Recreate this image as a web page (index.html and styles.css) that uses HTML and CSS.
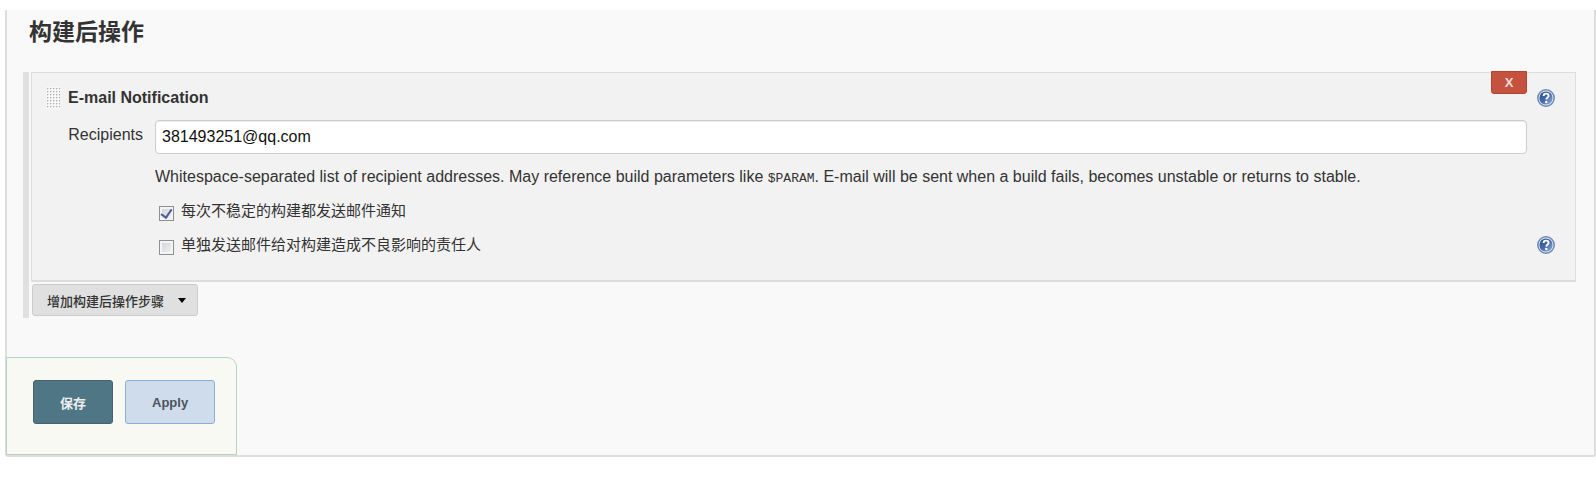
FILE: index.html
```html
<!DOCTYPE html>
<html lang="zh-CN">
<head>
    <meta charset="UTF-8">
    <meta name="viewport" content="width=device-width, initial-scale=1.0">
    <title>构建后操作</title>
    <link rel="stylesheet" href="styles.css">
</head>
<body>
    <svg width="0" height="0" class="defs" aria-hidden="true">
        <defs>
            <linearGradient id="help-fill" x1="0" y1="0" x2="1" y2="1">
                <stop offset="0" stop-color="#2c4f8c"/>
                <stop offset="0.5" stop-color="#4369a6"/>
                <stop offset="1" stop-color="#9bb5da"/>
            </linearGradient>
            <symbol id="help" viewBox="0 0 18 18">
                <circle cx="9" cy="9" r="8.2" fill="#e6edf6" stroke="#6a88b8" stroke-width="1.5"/>
                <circle cx="9" cy="9" r="6.6" fill="url(#help-fill)"/>
                <path d="M6.6 7C6.6 5.4 7.6 4.6 9.1 4.6s2.5.8 2.5 2.1c0 1.7-2.2 1.8-2.2 3.8" fill="none" stroke="#fff" stroke-width="1.9"/>
                <circle cx="9.3" cy="13" r="1.2" fill="#fff"/>
            </symbol>
            <pattern id="dots" width="3" height="3" patternUnits="userSpaceOnUse">
                <rect width="3" height="3" fill="#f8f8f8"/>
                <rect x="1" y="1" width="1" height="1" fill="#b0b0b0"/>
                <rect x="2" y="1" width="1" height="1" fill="#d8d8d8"/>
                <rect x="1" y="2" width="1" height="1" fill="#dcdcdc"/>
            </pattern>
        </defs>
    </svg>

    <form class="config" onsubmit="return false">
        <h1 class="section-title">构建后操作</h1>

        <div class="steps">
            <div class="step">
                <button type="button" class="delete" aria-label="Delete">X</button>

                <div class="step-header">
                    <svg class="handle" width="14" height="22" aria-hidden="true"><rect width="14" height="22" fill="url(#dots)"/></svg>
                    <h2 class="step-title">E-mail Notification</h2>
                    <button type="button" class="help" aria-label="Help"><svg width="18" height="18"><use href="#help"/></svg></button>
                </div>

                <div class="row">
                    <label class="name" for="recipients">Recipients</label>
                    <input type="text" class="text" id="recipients" value="381493251@qq.com">
                </div>

                <p class="description">Whitespace-separated list of recipient addresses. May reference build parameters like <code>$PARAM</code>. E-mail will be sent when a build fails, becomes unstable or returns to stable.</p>

                <div class="option">
                    <input type="checkbox" id="unstable" checked>
                    <label for="unstable">每次不稳定的构建都发送邮件通知</label>
                </div>
                <div class="option">
                    <input type="checkbox" id="individuals">
                    <label for="individuals">单独发送邮件给对构建造成不良影响的责任人</label>
                    <button type="button" class="help" aria-label="Help"><svg width="18" height="18"><use href="#help"/></svg></button>
                </div>
            </div>

            <button type="button" class="add">增加构建后操作步骤<span class="caret"></span></button>
        </div>

        <div class="actions">
            <button type="submit" class="save">保存</button>
            <button type="button" class="apply">Apply</button>
        </div>
    </form>
</body>
</html>
```
FILE: styles.css
```css
* {
    box-sizing: border-box;
}

body {
    margin: 0;
    padding: 10px 0 0 5px;
    background-color: #fff;
    color: #333;
    font-family: "Liberation Sans", Arial, "Noto Sans CJK SC", sans-serif;
    font-size: 16px;
    line-height: 20px;
}

button,
input {
    margin: 0;
    font-family: inherit;
    font-size: inherit;
}

button {
    cursor: pointer;
}

.defs {
    position: absolute;
}

.config {
    border: 2px solid #ddd;
    border-top: 0;
    border-radius: 0 0 3px 3px;
    background-color: #f9f9f9;
}

.section-title {
    margin: 0;
    padding: 6px 22px 24px;
    font-size: 23px;
    line-height: 32px;
}

.steps {
    margin: 0 18px 0 16px;
    padding: 0 0 2px 2px;
    border-left: 6px solid #e0e0e0;
}

.step {
    position: relative;
    padding: 14px 48px 18px 14px;
    border: 1px solid #ddd;
    border-bottom-width: 2px;
    background-color: #f2f2f2;
}

.delete {
    position: absolute;
    top: -2px;
    right: 48px;
    width: 36px;
    height: 23px;
    padding: 0;
    border: 1px solid #b34432;
    border-radius: 0 0 3px 3px;
    background-color: #c4523f;
    color: #f3dcd8;
    font-size: 13px;
    font-weight: bold;
}

.step-header,
.row,
.option {
    display: flex;
    align-items: center;
}

.step-header {
    height: 22px;
    margin-bottom: 11px;
}

.handle {
    margin-right: 8px;
}

.step-title {
    margin: 0;
    font-size: 16px;
}

.help {
    width: 18px;
    height: 18px;
    margin: 0 -28px 0 auto;
    padding: 0;
    border: 0;
    background: none;
}

.help svg {
    display: block;
}

.name {
    width: 109px;
    padding: 0 12px 4px 0;
    text-align: right;
}

.text {
    flex: 1;
    height: 34px;
    padding: 0 6px;
    border: 1px solid #ccc;
    border-radius: 4px;
    background-color: #fff;
    box-shadow: inset 0 1px 1px rgba(0, 0, 0, 0.08);
    color: #111;
}

.description {
    margin: 13px 0 5px 109px;
}

.description code {
    font-family: "Liberation Mono", monospace;
    font-size: 13px;
}

.option {
    height: 34px;
    padding-left: 113px;
    font-size: 15px;
}

.option input {
    display: flex;
    align-items: center;
    justify-content: center;
    width: 15px;
    height: 15px;
    margin: 4px 7px 0 0;
    border: 1px solid #8e8f8f;
    background: linear-gradient(135deg, #cbcfd5, #f6f6f6);
    box-shadow: inset 0 0 0 2px #f4f4f4;
    appearance: none;
}

.option input:checked::after {
    content: "";
    width: 5px;
    height: 9px;
    margin-bottom: 2px;
    border: solid #4a5f97;
    border-width: 0 2px 2px 0;
    transform: rotate(35deg);
}

.add {
    display: flex;
    align-items: center;
    gap: 14px;
    height: 32px;
    margin: 2px 0 0 1px;
    padding: 0 11px 0 14px;
    border: 1px solid #ccc;
    border-radius: 3px;
    background-color: #e0e0e0;
    color: #333;
    font-size: 13px;
    font-weight: 500;
}

.caret {
    border: 4px solid transparent;
    border-top: 5px solid #000;
    border-bottom: 0;
}

.actions {
    display: flex;
    gap: 12px;
    width: fit-content;
    margin: 39px 0 0 -1px;
    padding: 22px 21px 30px 26px;
    border: 1px solid #b4d3c0;
    border-radius: 0 10px 0 0;
    background-color: #f8f9f2;
}

.save,
.apply {
    height: 44px;
    padding: 0 26px;
    border: 1px solid #43646f;
    border-radius: 3px;
    background-color: #4f7685;
    color: #eee;
    font-size: 13px;
    font-weight: bold;
}

.apply {
    border-color: #8badd8;
    background-color: #cfdceb;
    color: #4d545d;
}
```
